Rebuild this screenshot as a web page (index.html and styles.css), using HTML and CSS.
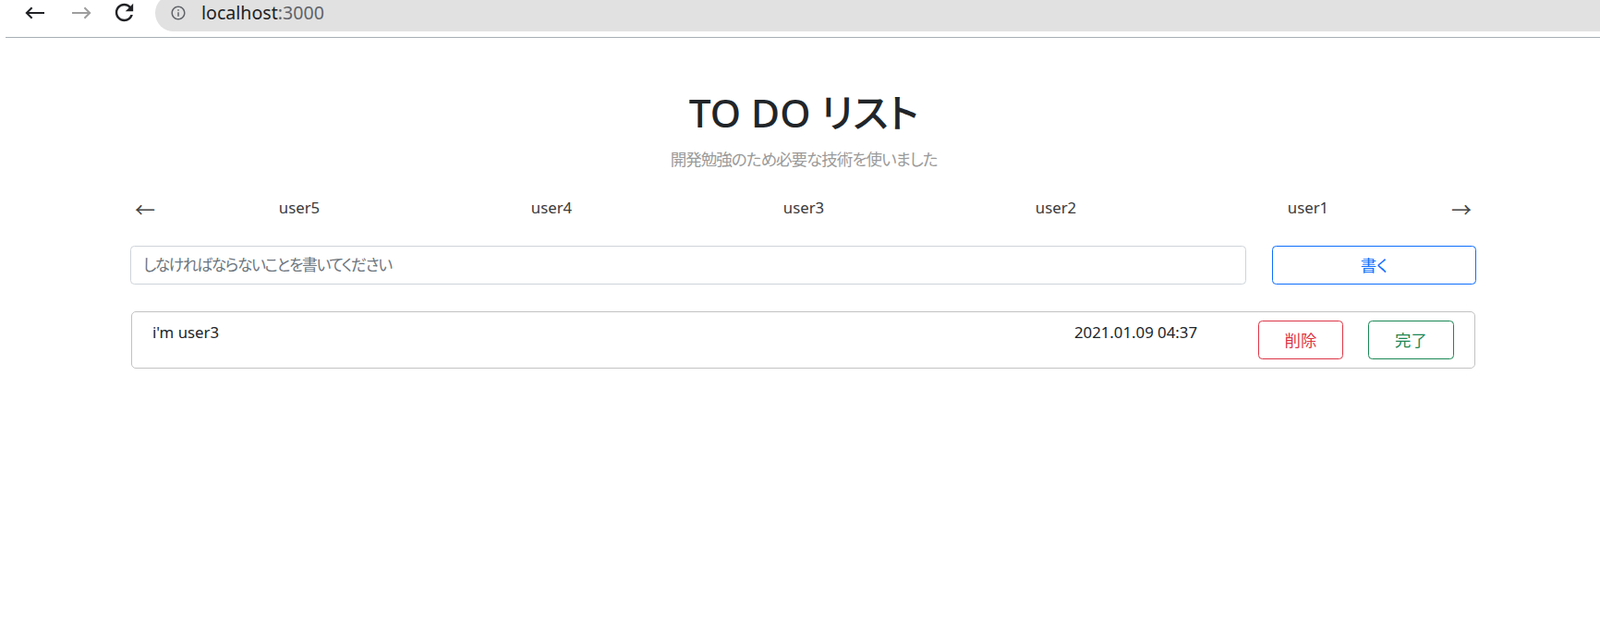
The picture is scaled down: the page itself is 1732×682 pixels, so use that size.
FILE: index.html
```html
<!DOCTYPE html>
<html lang="ja">
<head>
<meta charset="utf-8">
<title>TO DO リスト</title>
<link rel="stylesheet" href="styles.css">
</head>
<body>
  <div class="chrome">
    <div class="nav-icons">
      <svg class="ic ic-back" viewBox="0 0 22 14" width="22" height="14"><path d="M21 7H1.8M7.6 1.2L1.8 7l5.8 5.8" fill="none" stroke="#202124" stroke-width="2"/></svg>
      <svg class="ic ic-fwd" viewBox="0 0 22 14" width="22" height="14"><path d="M1 7h19.2M14.4 1.2L20.2 7l-5.8 5.8" fill="none" stroke="#9e9e9e" stroke-width="2"/></svg>
      <svg class="ic ic-reload" viewBox="0 0 24 24" width="29" height="29"><path fill="#202124" d="M17.65 6.35C16.2 4.9 14.21 4 12 4c-4.42 0-7.99 3.58-7.99 8s3.57 8 7.99 8c3.73 0 6.84-2.55 7.73-6h-2.08c-.82 2.33-3.04 4-5.65 4-3.31 0-6-2.690-6-6s2.69-6 6-6c1.66 0 3.14.69 4.22 1.78L13 11h7V4l-2.35 2.35z"/></svg>
    </div>
    <div class="omnibox">
      <svg class="ic-info" viewBox="0 0 24 24" width="18" height="18"><path fill="#5f6368" d="M11 7h2v2h-2zm0 4h2v6h-2zm1-9C6.48 2 2 6.48 2 12s4.48 10 10 10 10-4.48 10-10S17.52 2 12 2zm0 18c-4.41 0-8-3.59-8-8s3.59-8 8-8 8 3.59 8 8-3.59 8-8 8z"/></svg>
      <span class="url"><span class="host">localhost</span><span class="port">:3000</span></span>
    </div>
  </div>
  <div class="chrome-line"></div>

  <main class="container">
    <header class="header">
      <h1 class="title">TO DO リスト</h1>
      <p class="subtitle">開発勉強のため必要な技術を使いました</p>
    </header>

    <nav class="users">
      <span class="arrow arrow-left">←</span>
      <span class="user">user5</span>
      <span class="user">user4</span>
      <span class="user">user3</span>
      <span class="user">user2</span>
      <span class="user">user1</span>
      <span class="arrow arrow-right">→</span>
    </nav>

    <form class="todo-form">
      <input class="todo-input" type="text" placeholder="しなければならないことを書いてください">
      <button class="btn btn-write" type="button">書く</button>
    </form>

    <ul class="todo-list">
      <li class="todo-item">
        <span class="todo-text">i'm user3</span>
        <span class="todo-date">2021.01.09 04:37</span>
        <div class="todo-actions">
          <button class="btn btn-delete" type="button">削除</button>
          <button class="btn btn-done" type="button">完了</button>
        </div>
      </li>
    </ul>
  </main>
</body>
</html>
```

FILE: styles.css
```css
* {
  box-sizing: border-box;
}

body {
  margin: 0;
  background: #fff;
  font-family: "Noto Sans", "Noto Sans CJK JP", sans-serif;
  font-size: 16.8px;
  line-height: 1.5;
  color: #212529;
  font-feature-settings: "palt";
}

/* browser chrome */
.chrome {
  display: flex;
  align-items: flex-start;
  height: 40px;
  overflow: hidden;
}

.nav-icons {
  display: flex;
  align-items: center;
  height: 27px;
  padding-left: 27px;
}

.ic-back {
  margin-right: 28px;
}

.ic-fwd {
  margin-right: 21px;
}

.ic-reload {
  margin-right: 19px;
}

.omnibox {
  flex: 1;
  display: flex;
  align-items: center;
  height: 40px;
  margin-top: -6px;
  padding-left: 16px;
  background: #e1e1e1;
  border-radius: 20px 0 0 20px;
}

.ic-info {
  margin-right: 16px;
}

.url {
  font-family: "Noto Sans", sans-serif;
  font-size: 19.6px;
  line-height: 1;
  margin-top: -1px;
}

.host {
  color: #202124;
}

.port {
  color: #5f6368;
}

.chrome-line {
  height: 1px;
  margin-left: 6px;
  background: #a7aeb5;
}

/* page */
.container {
  width: 1456px;
  margin-left: 142px;
}

.header {
  text-align: center;
  padding-top: 55px;
}

.title {
  margin: 0;
  font-size: 42.5px;
  font-weight: 500;
  line-height: 52.8px;
  color: #212529;
}

.subtitle {
  margin: 10px 0 0;
  font-size: 17.6px;
  line-height: 26.4px;
  letter-spacing: -1.05px;
  color: #9a9a9a;
}

.users {
  display: grid;
  grid-template-columns: 45.5px repeat(5, 273px) 45.5px;
  align-items: center;
  margin-top: 27px;
  line-height: 26.4px;
  color: #3a3a3a;
}

.user {
  text-align: center;
}

.arrow {
  font-family: "Noto Sans CJK JP", sans-serif;
  font-size: 22px;
  color: #444;
  font-feature-settings: normal;
}

.arrow-left {
  justify-self: start;
  margin-left: 4px;
}

.arrow-right {
  justify-self: end;
  margin-right: 5px;
}

.todo-form {
  display: flex;
  gap: 28px;
  margin: 27px 0 0 -1px;
}

.todo-input {
  flex: 1;
  height: 42px;
  padding: 0 13px;
  border: 1px solid #ced4da;
  border-radius: 4.4px;
  font: inherit;
  color: #212529;
  outline: none;
}

.todo-input::placeholder {
  color: #6c757d;
  letter-spacing: -1.4px;
}

.btn {
  height: 42px;
  background: #fff;
  border: 1px solid;
  border-radius: 4.4px;
  font: inherit;
  font-size: 17.4px;
  cursor: pointer;
}

.btn-write {
  width: 221px;
  color: #0d6efd;
  border-color: #0d6efd;
}

.todo-list {
  list-style: none;
  margin: 29px 0 0;
  padding: 0;
}

.todo-item {
  display: flex;
  align-items: flex-start;
  width: 1455px;
  height: 62px;
  padding: 9px 22px 0 22px;
  border: 1px solid #c2c2c2;
  border-radius: 5px;
}

.todo-text {
  flex: 1;
  line-height: 26.4px;
}

.todo-date {
  line-height: 26.4px;
  color: #212529;
}

.todo-actions {
  display: flex;
  gap: 27px;
  margin-left: 66px;
}

.btn-delete {
  width: 92px;
  color: #dc3545;
  border-color: #dc3545;
}

.btn-done {
  width: 93px;
  color: #198754;
  border-color: #198754;
}
```
